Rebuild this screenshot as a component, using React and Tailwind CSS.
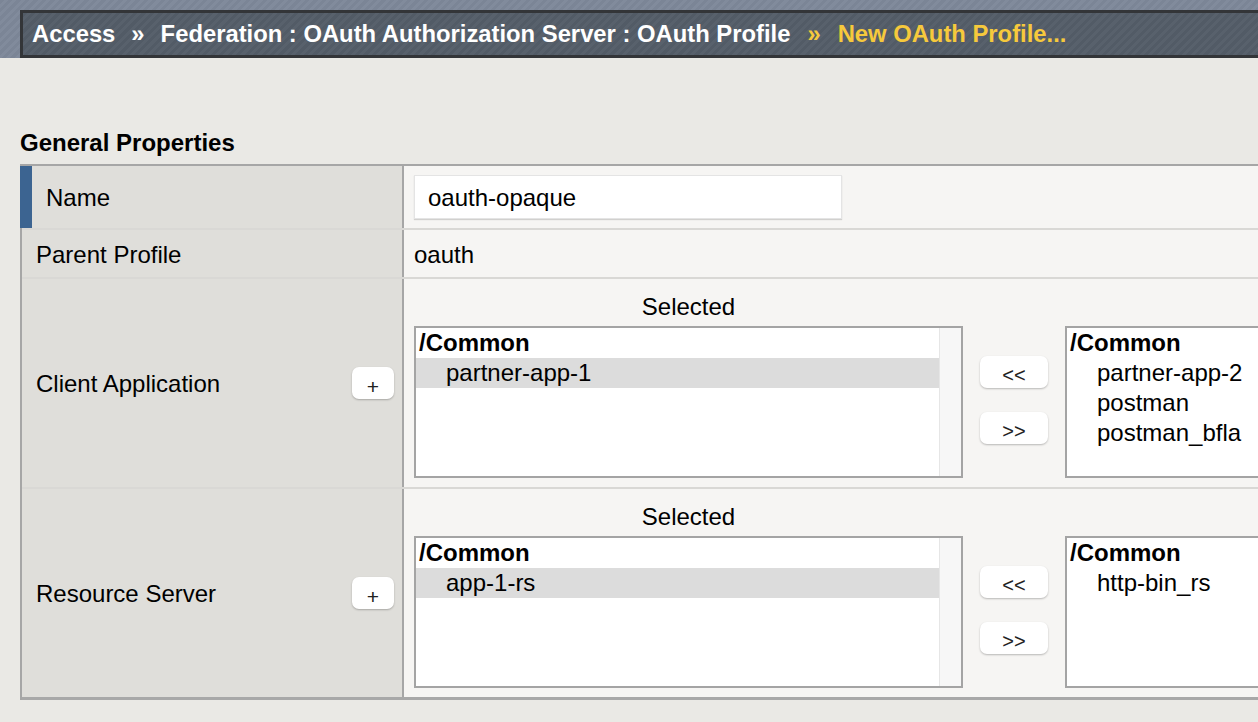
import React from 'react';

const font = { fontFamily: '"Liberation Sans", Arial, Helvetica, sans-serif' };

const Listbox = ({ items, selected, scroll, width }) => (
  <div
    className={`h-[152px] border-2 border-[#a4a4a4] bg-white flex shrink-0 ${width}`}
  >
    <div className="flex-1 min-w-0">
      <div className="h-[30px] leading-[30px] pl-[3px] font-bold">/Common</div>
      {items.map((it) => (
        <div
          key={it}
          className={`h-[30px] leading-[30px] pl-[30px] ${
            selected === it ? 'bg-[#dcdcdc]' : ''
          }`}
        >
          {it}
        </div>
      ))}
    </div>
    {scroll && (
      <div className="w-[22px] shrink-0 bg-[#f7f7f7] border-l border-[#e6e6e6]" />
    )}
  </div>
);

const SmallButton = ({ children, className = '' }) => (
  <button
    type="button"
    className={`bg-white rounded-[7px] shadow-[0_1px_2px_rgba(0,0,0,0.25)] text-[20px] leading-none text-[#222] flex items-center justify-center pt-[6px] ${className}`}
  >
    {children}
  </button>
);

const DualList = ({ selectedItems, availableItems, highlighted }) => (
  <div className="pt-[13px] pb-[9px] pl-[10px]">
    <div className="flex">
      <div className="w-[549px] h-[30px] leading-[30px] mb-[4px] text-center">
        Selected
      </div>
    </div>
    <div className="flex">
      <Listbox
        items={selectedItems}
        selected={highlighted}
        scroll
        width="w-[549px]"
      />
      <div className="flex flex-col gap-[24px] pt-[30px] px-[17px]">
        <SmallButton className="w-[68px] h-[32px]">&lt;&lt;</SmallButton>
        <SmallButton className="w-[68px] h-[32px]">&gt;&gt;</SmallButton>
      </div>
      <Listbox items={availableItems} width="w-[260px]" />
    </div>
  </div>
);

const Row = ({ label, marker, plus, children, last }) => (
  <div
    className={`flex ${
      last ? 'border-b-[3px] border-[#a8a8a8]' : 'border-b-2 border-[#d9d8d5]'
    }`}
  >
    <div
      className={`shrink-0 bg-[#dfdeda] border-r-2 border-[#a6a6a6] flex items-center justify-between pr-[8px] ${
        marker
          ? 'w-[384px] -ml-[2px] pl-[14px] border-l-[12px] border-l-[#3c6491]'
          : 'w-[382px] pl-[14px]'
      }`}
    >
      <span className="pt-[2px]">{label}</span>
      {plus && (
        <SmallButton className="w-[42px] h-[32px] text-[21px] pt-[4px]">
          +
        </SmallButton>
      )}
    </div>
    <div className="flex-1 bg-[#f6f5f3]">{children}</div>
  </div>
);

export default function App() {
  return (
    <div
      className="min-h-[722px] w-[1258px] overflow-hidden bg-[#eae9e5] text-[24px] text-black"
      style={font}
    >
      {/* breadcrumb */}
      <div className="h-[58px] pt-[10px] pl-[20px] bg-[repeating-linear-gradient(135deg,#7b8596_0px,#7b8596_3px,#818b9c_3px,#818b9c_6px)]">
        <div className="h-[48px] border-y-[3px] border-l-[3px] border-[#333538] bg-[repeating-linear-gradient(135deg,#525b66_0px,#525b66_3px,#58616c_3px,#58616c_6px)] flex items-center pl-[9px] text-[23.8px] font-bold text-white whitespace-nowrap">
          <span>Access</span>
          <span className="mx-[16px]">»</span>
          <span>Federation : OAuth Authorization Server : OAuth Profile</span>
          <span className="ml-[17px] mr-[17px] text-[#f6c93c]">»</span>
          <span className="text-[#f6c93c]">New OAuth Profile...</span>
        </div>
      </div>

      <div className="pl-[20px] pt-[71px]">
        <h2 className="font-bold text-[24px] leading-[28px] mb-[7px]">
          General Properties
        </h2>

        <div className="w-[1300px] border-t-2 border-l-2 border-[#a6a6a6]">
          <Row label="Name" marker>
            <div className="h-[62px] flex items-center pl-[10px]">
              <div className="w-[428px] h-[44px] bg-white border border-[#e4e4e4] shadow-[0_1px_1px_rgba(0,0,0,0.15)] flex items-center pl-[13px] pt-[2px]">
                oauth-opaque
              </div>
            </div>
          </Row>
          <Row label="Parent Profile">
            <div className="h-[47px] flex items-center pl-[10px] pt-[2px]">
              oauth
            </div>
          </Row>
          <Row label="Client Application" plus>
            <DualList
              selectedItems={['partner-app-1']}
              highlighted="partner-app-1"
              availableItems={['partner-app-2', 'postman', 'postman_bfla']}
            />
          </Row>
          <Row label="Resource Server" plus last>
            <DualList
              selectedItems={['app-1-rs']}
              highlighted="app-1-rs"
              availableItems={['http-bin_rs']}
            />
          </Row>
        </div>
      </div>
    </div>
  );
}
